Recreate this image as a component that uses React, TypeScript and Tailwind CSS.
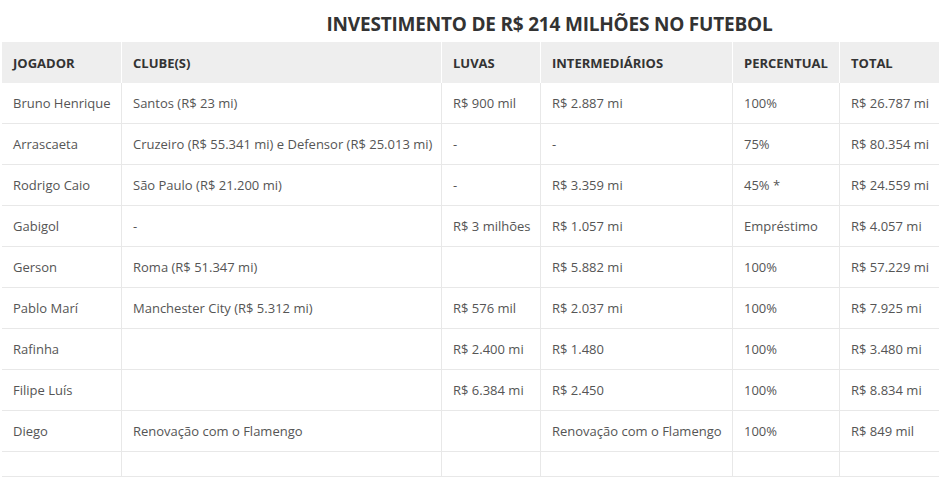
import React from 'react';

type Row = {
  jogador: string;
  clubes: string;
  luvas: string;
  intermediarios: string;
  percentual: string;
  total: string;
};

const rows: Row[] = [
  { jogador: 'Bruno Henrique', clubes: 'Santos (R$ 23 mi)', luvas: 'R$ 900 mil', intermediarios: 'R$ 2.887 mi', percentual: '100%', total: 'R$ 26.787 mi' },
  { jogador: 'Arrascaeta', clubes: 'Cruzeiro (R$ 55.341 mi) e Defensor (R$ 25.013 mi)', luvas: '-', intermediarios: '-', percentual: '75%', total: 'R$ 80.354 mi' },
  { jogador: 'Rodrigo Caio', clubes: 'São Paulo (R$ 21.200 mi)', luvas: '-', intermediarios: 'R$ 3.359 mi', percentual: '45% *', total: 'R$ 24.559 mi' },
  { jogador: 'Gabigol', clubes: '-', luvas: 'R$ 3 milhões', intermediarios: 'R$ 1.057 mi', percentual: 'Empréstimo', total: 'R$ 4.057 mi' },
  { jogador: 'Gerson', clubes: 'Roma (R$ 51.347 mi)', luvas: '', intermediarios: 'R$ 5.882 mi', percentual: '100%', total: 'R$ 57.229 mi' },
  { jogador: 'Pablo Marí', clubes: 'Manchester City (R$ 5.312 mi)', luvas: 'R$ 576 mil', intermediarios: 'R$ 2.037 mi', percentual: '100%', total: 'R$ 7.925 mi' },
  { jogador: 'Rafinha', clubes: '', luvas: 'R$ 2.400 mi', intermediarios: 'R$ 1.480', percentual: '100%', total: 'R$ 3.480 mi' },
  { jogador: 'Filipe Luís', clubes: '', luvas: 'R$ 6.384 mi', intermediarios: 'R$ 2.450', percentual: '100%', total: 'R$ 8.834 mi' },
  { jogador: 'Diego', clubes: 'Renovação com o Flamengo', luvas: '', intermediarios: 'Renovação com o Flamengo', percentual: '100%', total: 'R$ 849 mil' },
];

const headers = ['Jogador', 'Clube(s)', 'Luvas', 'Intermediários', 'Percentual', 'Total'];

const App: React.FC = () => {
  return (
    <div className="w-[945px] h-[483px] bg-white overflow-hidden font-['Open_Sans',sans-serif]">
      <h1 className="pl-[154px] pt-[11px] pb-[4px] text-center text-[19px] tracking-[-0.2px] leading-[27px] font-bold text-[#333333]">
        INVESTIMENTO DE R$ 214 MILHÕES NO FUTEBOL
      </h1>

      <table className="ml-[2px] w-[937px] table-fixed border-separate border-spacing-0 text-[13px]">
        <colgroup>
          <col className="w-[119px]" />
          <col className="w-[320px]" />
          <col className="w-[99px]" />
          <col className="w-[192px]" />
          <col className="w-[107px]" />
          <col className="w-[100px]" />
        </colgroup>
        <thead>
          <tr className="h-[41px] bg-[#eeeeee]">
            {headers.map((h, i) => (
              <th
                key={h}
                className={`px-[11px] pt-[2px] text-left align-middle font-bold uppercase text-[#333333] whitespace-nowrap ${i > 0 ? 'border-l border-white' : ''}`}
              >
                {h}
              </th>
            ))}
          </tr>
        </thead>
        <tbody className="text-[#555555]">
          {rows.map((r) => (
            <tr key={r.jogador} className="h-[41px]">
              <td className="px-[11px] pt-[2px] align-middle whitespace-nowrap border-b border-[#e8e8e8]">{r.jogador}</td>
              <td className="px-[11px] pt-[2px] align-middle whitespace-nowrap border-b border-l border-[#e8e8e8]">{r.clubes}</td>
              <td className="px-[11px] pt-[2px] align-middle whitespace-nowrap border-b border-l border-[#e8e8e8]">{r.luvas}</td>
              <td className="px-[11px] pt-[2px] align-middle whitespace-nowrap border-b border-l border-[#e8e8e8]">{r.intermediarios}</td>
              <td className="px-[11px] pt-[2px] align-middle whitespace-nowrap border-b border-l border-[#e8e8e8]">{r.percentual}</td>
              <td className="px-[11px] pt-[2px] align-middle whitespace-nowrap border-b border-l border-[#e8e8e8]">{r.total}</td>
            </tr>
          ))}
          <tr className="h-[25px]">
            <td className="border-b border-[#e8e8e8]" />
            <td className="border-b border-l border-[#e8e8e8]" />
            <td className="border-b border-l border-[#e8e8e8]" />
            <td className="border-b border-l border-[#e8e8e8]" />
            <td className="border-b border-l border-[#e8e8e8]" />
            <td className="border-b border-l border-[#e8e8e8]" />
          </tr>
        </tbody>
      </table>
    </div>
  );
};

export default App;
